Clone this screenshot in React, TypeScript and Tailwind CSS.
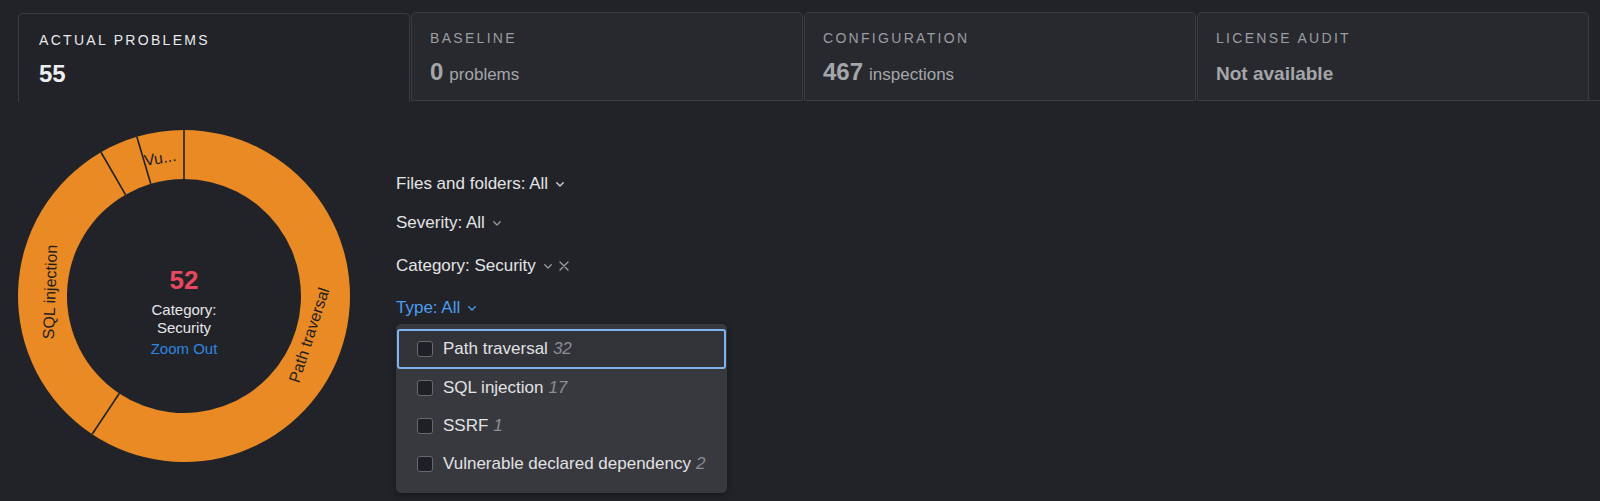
import React from 'react';

const tabs = [
  { label: 'ACTUAL PROBLEMS', value: '55', unit: '', active: true },
  { label: 'BASELINE', value: '0', unit: 'problems', active: false },
  { label: 'CONFIGURATION', value: '467', unit: 'inspections', active: false },
  { label: 'LICENSE AUDIT', value: '', unit: 'Not available', active: false },
];

const types = [
  { name: 'Path traversal', count: 32 },
  { name: 'SQL injection', count: 17 },
  { name: 'SSRF', count: 1 },
  { name: 'Vulnerable declared dependency', count: 2 },
];

const CX = 170;
const CY = 170;
const RO = 166;
const RI = 117;

function pt(r: number, deg: number): [number, number] {
  const a = (deg * Math.PI) / 180;
  return [CX + r * Math.sin(a), CY - r * Math.cos(a)];
}

function arc(a0: number, a1: number) {
  const large = a1 - a0 > 180 ? 1 : 0;
  const [x0, y0] = pt(RO, a0);
  const [x1, y1] = pt(RO, a1);
  const [x2, y2] = pt(RI, a1);
  const [x3, y3] = pt(RI, a0);
  return `M${x0} ${y0} A${RO} ${RO} 0 ${large} 1 ${x1} ${y1} L${x2} ${y2} A${RI} ${RI} 0 ${large} 0 ${x3} ${y3} Z`;
}

const segments = [
  [0, 213.6],
  [213.6, 330],
  [330, 343.5],
  [343.5, 359.99],
];

function Chevron({ color }: { color: string }) {
  return (
    <svg width="8" height="5" viewBox="0 0 8 5" fill="none" className="ml-2 mt-px">
      <path d="M0.75 0.75 L4 4 L7.25 0.75" stroke={color} strokeWidth="1.3" strokeLinecap="round" strokeLinejoin="round" />
    </svg>
  );
}

function Donut() {
  return (
    <svg width="340" height="340" viewBox="0 0 340 340" className="ml-[14px] mt-[25px]">
      {segments.map(([a, b], i) => (
        <path key={i} d={arc(a, b)} fill="#e98a24" />
      ))}
      {[0, 213.6, 330, 343.5].map((a) => {
        const [x0, y0] = pt(RI, a);
        const [x1, y1] = pt(RO, a);
        return <line key={a} x1={x0} y1={y0} x2={x1} y2={y1} stroke="#202226" strokeWidth="1.6" />;
      })}
      <g fontFamily="'Liberation Sans', Arial, sans-serif" fontSize="16" fill="#1e1f22" textAnchor="middle" dominantBaseline="central">
        <text transform="translate(295 209) rotate(-72)">Path traversal</text>
        <text transform="translate(36 166) rotate(-88)">SQL injection</text>
        <text transform="translate(146 32) rotate(-9)">Vu...</text>
      </g>
      <g fontFamily="'Liberation Sans', Arial, sans-serif" textAnchor="middle" dominantBaseline="central">
        <text x="170" y="154" fontSize="26" fontWeight="700" fill="#e8475f">52</text>
        <text x="170" y="183" fontSize="15" fill="#e6e7e9">Category:</text>
        <text x="170" y="201" fontSize="15" fill="#e6e7e9">Security</text>
        <text x="170" y="222" fontSize="15" fill="#2f86e0">Zoom Out</text>
      </g>
    </svg>
  );
}

export default function App() {
  return (
    <div className="w-full h-[501px] bg-[#212328] overflow-hidden font-['Liberation_Sans',Arial,sans-serif]">
      <div className="flex items-end h-[101px] pl-[18px]">
        {tabs.map((t) => (
          <div
            key={t.label}
            className={
              t.active
                ? 'w-[392px] h-[89px] -mb-px rounded-t-[5px] border border-b-0 border-[#3a3c41] bg-[#212328] px-5 pt-[18px]'
                : 'w-[392px] h-[89px] ml-px rounded-t-[5px] border border-[#3a3c41] bg-[#27292e] px-[18px] pt-[17px]'
            }
          >
            <div
              className={
                t.active
                  ? 'text-[14px] leading-[16px] tracking-[2.3px] text-[#e9eaec]'
                  : 'text-[14px] leading-[16px] tracking-[2.3px] text-[#9b9da1]'
              }
            >
              {t.label}
            </div>
            {t.value ? (
              <div className="mt-[12px] flex items-baseline h-[28px] leading-[28px]">
                <span className={t.active ? 'text-[24px] font-bold text-[#eceef0]' : 'text-[24px] font-bold text-[#a4a6aa]'}>
                  {t.value}
                </span>
                {t.unit && <span className="ml-[6px] text-[17px] text-[#a4a6aa]">{t.unit}</span>}
              </div>
            ) : (
              <div className="mt-[14px] h-[26px] leading-[28px] text-[19px] font-bold text-[#a4a6aa]">{t.unit}</div>
            )}
          </div>
        ))}
        <div className="flex-1 border-b border-[#3a3c41]" />
      </div>

      <div className="flex">
        <div className="w-[396px] shrink-0">
          <Donut />
        </div>
        <div className="pt-[71px] text-[17px] leading-[24px] text-[#e3e4e6]">
          <div className="flex items-center h-[24px]">
            Files and folders: All
            <Chevron color="#d8d9db" />
          </div>
          <div className="flex items-center h-[24px] mt-[15px]">
            Severity: All
            <Chevron color="#9a9b9f" />
          </div>
          <div className="flex items-center h-[24px] mt-[19px]">
            Category: Security
            <Chevron color="#9a9b9f" />
            <svg width="10" height="10" viewBox="0 0 10 10" className="ml-[7px]">
              <path d="M1 1 L9 9 M9 1 L1 9" stroke="#9a9b9f" strokeWidth="1.4" strokeLinecap="round" />
            </svg>
          </div>
          <div className="flex items-center h-[24px] mt-[18px] text-[#4d9ef0]">
            Type: All
            <Chevron color="#4d9ef0" />
          </div>
          <div className="mt-[4px] w-[331px] rounded-[5px] bg-[#38393e] px-px pt-[5px] pb-[10px] shadow-[0_2px_6px_rgba(0,0,0,0.35)]">
            {types.map((t, i) => (
              <div
                key={t.name}
                className={
                  i === 0
                    ? 'flex items-center h-[40px] pl-[18px] rounded-[3px] border-2 border-[#7db3ee] bg-[#323338]'
                    : 'flex items-center h-[38px] pl-[20px]'
                }
              >
                <div className="w-4 h-4 rounded-[3px] border border-[#68696e] bg-[#1f2023]" />
                <span className="ml-[10px] text-[#e1e2e4]">{t.name}</span>
                <span className="ml-[5px] italic text-[#8c8d91]">{t.count}</span>
              </div>
            ))}
          </div>
        </div>
      </div>
    </div>
  );
}
